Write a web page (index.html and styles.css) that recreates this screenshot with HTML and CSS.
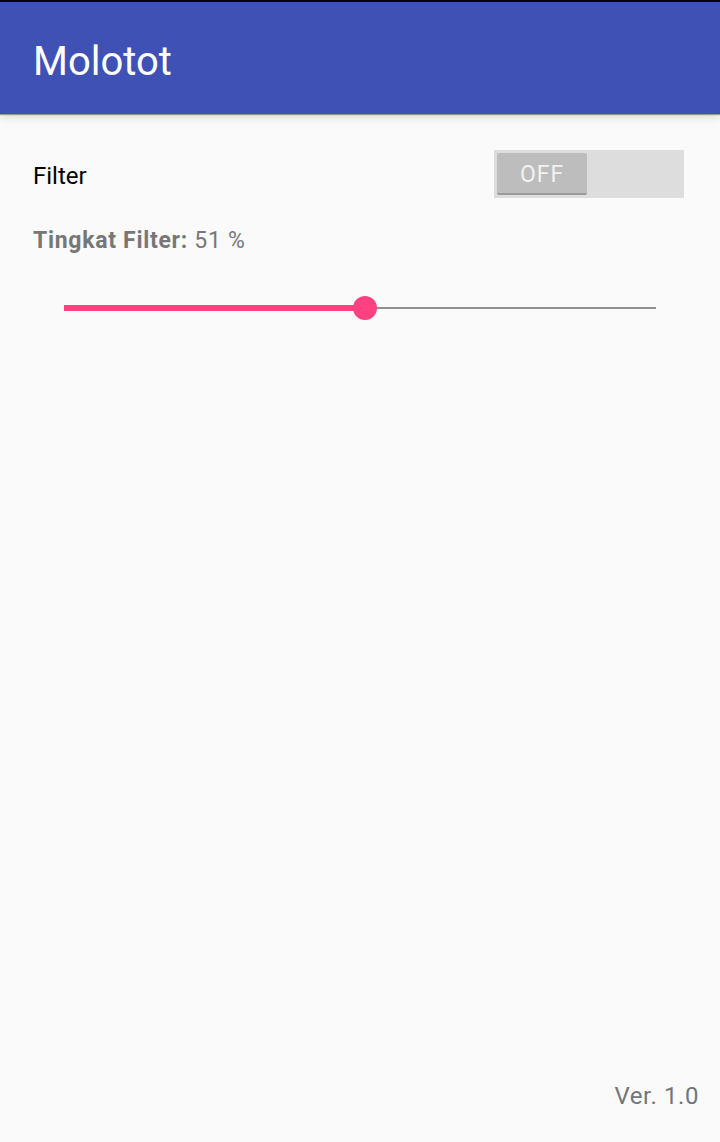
FILE: index.html
```html
<!DOCTYPE html>
<html lang="en">
<head>
    <meta charset="UTF-8">
    <meta name="viewport" content="width=device-width, initial-scale=1.0">
    <title>Molotot</title>
    <link rel="stylesheet" href="styles.css">
</head>
<body>
    <header class="appbar">
        <h1 class="title">Molotot</h1>
    </header>

    <main class="content">
        <div class="filter-row">
            <span class="filter-label">Filter</span>
            <div class="switch">
                <div class="switch-thumb">OFF</div>
            </div>
        </div>

        <div class="level"><b>Tingkat Filter:</b> 51 %</div>

        <div class="slider">
            <div class="slider-fill" style="width: 50.8%"></div>
            <div class="slider-rest"></div>
            <div class="slider-thumb" style="left: 50.8%"></div>
        </div>
    </main>

    <footer class="version">Ver. 1.0</footer>
</body>
</html>
```

FILE: styles.css
```css
html, body {
    height: 100%;
}
body {
    margin: 0;
    background-color: #fafafa;
    font-family: Roboto, "Noto Sans", Arial, sans-serif;
    display: flex;
    flex-direction: column;
}
.appbar {
    height: 112px;
    border-top: 2px solid #000;
    background-color: #3f51b5;
    box-shadow: 0 1px 1px rgba(0, 0, 0, 0.35), 0 3px 10px rgba(0, 0, 0, 0.12);
    display: flex;
    align-items: center;
    padding-left: 33px;
    position: relative;
}
.title {
    margin: 0;
    color: #fff;
    font-size: 40px;
    font-weight: normal;
    line-height: 1;
    padding-top: 8px;
}
.content {
    padding: 36px 36px 0 33px;
}
.filter-row {
    display: flex;
    justify-content: space-between;
    align-items: center;
    height: 48px;
}
.filter-label {
    font-size: 24px;
    color: #000;
    padding-top: 3px;
}
.switch {
    width: 190px;
    height: 48px;
    background-color: #dddddd;
    box-sizing: border-box;
    padding: 3px;
}
.switch-thumb {
    width: 90px;
    height: 42px;
    box-sizing: border-box;
    padding-top: 3px;
    background-color: #bdbdbd;
    border-radius: 2px;
    border-bottom: 2px solid #9a9a9a;
    color: #f2f2f2;
    font-size: 23px;
    text-align: center;
    line-height: 38px;
    letter-spacing: 1px;
}
.level {
    margin-top: 28px;
    font-size: 23px;
    line-height: 30px;
    letter-spacing: 0.7px;
    color: #777;
}
.slider {
    position: relative;
    margin: 40px 28px 0 31px;
    height: 24px;
    display: flex;
    align-items: center;
}
.slider-fill {
    height: 6px;
    background-color: #ff4081;
}
.slider-rest {
    flex: 1;
    height: 2px;
    background-color: #909090;
}
.slider-thumb {
    position: absolute;
    top: 0;
    width: 24px;
    height: 24px;
    margin-left: -12px;
    border-radius: 50%;
    background-color: #ff4081;
}
.version {
    margin-top: auto;
    padding: 0 21px 31px 0;
    text-align: right;
    font-size: 24px;
    line-height: 30px;
    letter-spacing: 0.6px;
    color: #757575;
}
```
